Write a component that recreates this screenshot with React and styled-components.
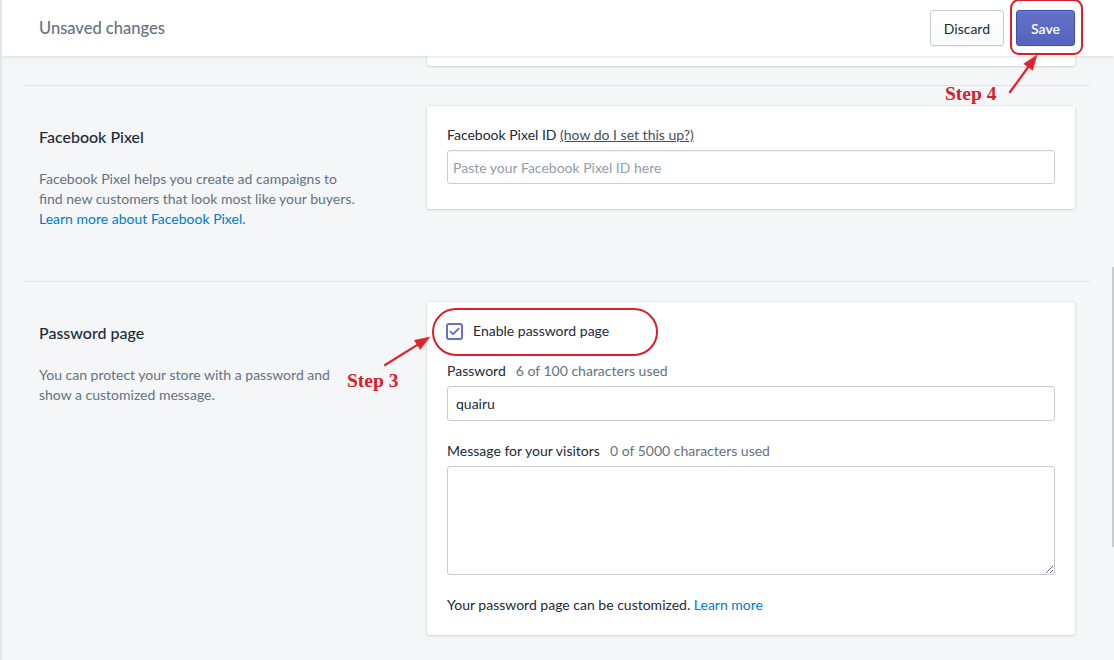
import React from "react";
import styled, { createGlobalStyle } from "styled-components";

const GlobalStyle = createGlobalStyle`
  html, body { margin: 0; padding: 0; }
  body {
    background: #f4f6f8;
    font-family: Lato, "Noto Sans", "Liberation Sans", sans-serif;
    color: #212b36;
    -webkit-font-smoothing: antialiased;
  }
  * { box-sizing: border-box; }
`;

const Shell = styled.div`
  position: relative;
  width: 1114px;
  height: 660px;
  overflow: hidden;
  background: #f4f6f8;
  border-left: 2px solid #e3e6ea;
`;

const TopBar = styled.header`
  position: relative;
  z-index: 2;
  height: 56px;
  display: flex;
  align-items: center;
  justify-content: space-between;
  padding: 0 39px 0 37px;
  background: #fff;
  box-shadow: 0 1px 3px rgba(63, 63, 68, 0.15);
`;

const Title = styled.span`
  font-size: 16.5px;
  font-weight: 500;
  color: #637381;
`;

const Actions = styled.div`
  display: flex;
  gap: 12px;
`;

const Button = styled.button`
  height: 36px;
  padding: 0 ${(p) => p.$pad || 14}px;
  font: inherit;
  font-size: 14px;
  border-radius: 3px;
  cursor: pointer;
  color: #212b36;
  background: linear-gradient(#fff, #f9fafb);
  border: 1px solid #c4cdd5;
  box-shadow: 0 1px 0 rgba(22, 29, 37, 0.05);
`;

const PrimaryButton = styled(Button)`
  color: #fff;
  font-weight: 600;
  background: linear-gradient(#6371c7, #5563c1);
  border-color: #3f4eae;
  box-shadow: inset 0 1px 0 0 #6f7bcb, 0 1px 0 rgba(22, 29, 37, 0.05);
`;

const Content = styled.main`
  padding: 0 24px 0 22px;
`;

const CardTail = styled.div`
  margin-left: 403px;
  width: 648px;
  height: 10px;
  background: #fff;
  border-radius: 0 0 3px 3px;
  box-shadow: 0 0 0 1px rgba(63, 63, 68, 0.05), 0 1px 3px rgba(63, 63, 68, 0.15);
  margin-bottom: 19px;
`;

const Section = styled.section`
  display: grid;
  grid-template-columns: 368px 648px;
  column-gap: 20px;
  align-items: start;
  padding: 20px 15px 21px;
  border-top: 1px solid #dfe3e8;
`;

const Aside = styled.div`
  padding: 19px 0 31px 0;
`;

const Heading = styled.h2`
  margin: 0 0 20px;
  font-size: 16px;
  line-height: 24px;
  font-weight: 500;
  color: #212b36;
`;

const Description = styled.p`
  max-width: 320px;
  margin: 0;
  font-size: 14px;
  line-height: 20px;
  color: #637381;
`;

const Link = styled.a`
  color: #007ace;
  text-decoration: none;
`;

const Card = styled.div`
  display: flex;
  flex-direction: column;
  gap: ${(p) => p.$gap || 20}px;
  padding: 19px 20px ${(p) => p.$bottom || 20}px;
  background: #fff;
  border-radius: 3px;
  box-shadow: 0 0 0 1px rgba(63, 63, 68, 0.05), 0 1px 3px rgba(63, 63, 68, 0.15);
`;

const Field = styled.div`
  display: flex;
  flex-direction: column;
  gap: 5px;
`;

const Label = styled.label`
  font-size: 14px;
  line-height: 20px;
  color: #212b36;
`;

const Hint = styled.span`
  margin-left: 10px;
  color: #637381;
`;

const HelpLink = styled.a`
  color: #454f5b;
  text-decoration: underline;
`;

const TextInput = styled.input`
  height: ${(p) => (p.$tight ? 34 : 35)}px;
  padding: 0 ${(p) => (p.$tight ? 5 : 8)}px;
  font: inherit;
  font-size: 14px;
  color: #212b36;
  border: 1px solid #c4cdd5;
  border-radius: 3px;
  box-shadow: inset 0 1px 0 0 rgba(99, 115, 129, 0.05);
  outline: none;
  &::placeholder { color: #919eab; }
`;

const TextArea = styled.textarea`
  height: 109px;
  padding: 6px 8px;
  font: inherit;
  font-size: 14px;
  border: 1px solid #c4cdd5;
  border-radius: 3px;
  outline: none;
`;

const CheckRow = styled.label`
  display: flex;
  align-items: center;
  gap: 10px;
  margin-left: -1px;
  font-size: 14px;
  line-height: 20px;
  color: #212b36;
`;

const CheckBox = styled.span`
  width: 17px;
  height: 17px;
  display: flex;
  align-items: center;
  justify-content: center;
  border: 2px solid #6470c6;
  border-radius: 3px;
  background: #fff;
`;

const Footnote = styled.p`
  margin: 0;
  font-size: 14px;
  line-height: 20px;
  color: #212b36;
`;

/* annotation layer drawn over the settings page */
const Overlay = styled.div`
  position: absolute;
  inset: 0;
  z-index: 5;
  pointer-events: none;
`;

const Ring = styled.div`
  position: absolute;
  left: ${(p) => p.$x}px;
  top: ${(p) => p.$y}px;
  width: ${(p) => p.$w}px;
  height: ${(p) => p.$h}px;
  border: 2px solid #d7202b;
  border-radius: ${(p) => p.$r}px;
`;

const StepLabel = styled.span`
  position: absolute;
  left: ${(p) => p.$x}px;
  top: ${(p) => p.$y}px;
  font-family: "Liberation Serif", "DejaVu Serif", serif;
  font-weight: 700;
  font-size: 19.5px;
  line-height: 20px;
  color: #d7202b;
`;

const Arrows = styled.svg`
  position: absolute;
  inset: 0;
`;

const ScrollThumb = styled.div`
  position: absolute;
  right: 0;
  top: 267px;
  width: 2px;
  height: 280px;
  background: #c8cbcf;
`;

function Arrow({ x1, y1, x2, y2 }) {
  const dx = x2 - x1;
  const dy = y2 - y1;
  const len = Math.hypot(dx, dy);
  const ux = dx / len;
  const uy = dy / len;
  const head = 15;
  const half = 5.5;
  const bx = x2 - ux * head;
  const by = y2 - uy * head;
  const pts = `${x2},${y2} ${bx - uy * half},${by + ux * half} ${bx + uy * half},${by - ux * half}`;
  return (
    <g fill="#e0232c" stroke="#e0232c">
      <line x1={x1} y1={y1} x2={bx + ux * 2} y2={by + uy * 2} strokeWidth="2.2" strokeLinecap="round" />
      <polygon points={pts} strokeWidth="0.5" />
    </g>
  );
}

export default function App() {
  return (
    <>
      <GlobalStyle />
      <Shell>
        <TopBar>
          <Title>Unsaved changes</Title>
          <Actions>
            <Button $pad={13}>Discard</Button>
            <PrimaryButton $pad={14}>Save</PrimaryButton>
          </Actions>
        </TopBar>

        <Content>
          <CardTail />

          <Section>
            <Aside>
              <Heading>Facebook Pixel</Heading>
              <Description>
                Facebook Pixel helps you create ad campaigns to find new customers that look most like your buyers.{" "}
                <Link href="#">Learn more about Facebook Pixel.</Link>
              </Description>
            </Aside>
            <Card $bottom={25}>
              <Field>
                <Label>
                  Facebook Pixel ID <HelpLink href="#">(how do I set this up?)</HelpLink>
                </Label>
                <TextInput $tight placeholder="Paste your Facebook Pixel ID here" />
              </Field>
            </Card>
          </Section>

          <Section>
            <Aside>
              <Heading>Password page</Heading>
              <Description>
                You can protect your store with a password and show a customized message.
              </Description>
            </Aside>
            <Card $gap={20}>
              <CheckRow>
                <CheckBox>
                  <svg width="11" height="9" viewBox="0 0 11 9">
                    <path d="M1.5 4.6 L4.2 7.2 L9.6 1.6" fill="none" stroke="#5c6ac4" strokeWidth="1.8" strokeLinecap="round" strokeLinejoin="round" />
                  </svg>
                </CheckBox>
                Enable password page
              </CheckRow>
              <Field>
                <Label>
                  Password<Hint>6 of 100 characters used</Hint>
                </Label>
                <TextInput defaultValue="quairu" />
              </Field>
              <Field>
                <Label>
                  Message for your visitors<Hint>0 of 5000 characters used</Hint>
                </Label>
                <TextArea />
              </Field>
              <Footnote>
                Your password page can be customized. <Link href="#">Learn more</Link>
              </Footnote>
            </Card>
          </Section>
        </Content>

        <ScrollThumb />

        <Overlay>
          <Ring $x={1008} $y={-1} $w={73} $h={56} $r={9} />
          <Ring $x={430} $y={308} $w={226} $h={48} $r={24} />
          <StepLabel $x={943} $y={84}>Step 4</StepLabel>
          <StepLabel $x={345} $y={371}>Step 3</StepLabel>
          <Arrows width="1114" height="660" viewBox="0 0 1114 660">
            <Arrow x1={1008} y1={92} x2={1035} y2={55} />
            <Arrow x1={383} y1={365} x2={428} y2={337} />
          </Arrows>
        </Overlay>
      </Shell>
    </>
  );
}
